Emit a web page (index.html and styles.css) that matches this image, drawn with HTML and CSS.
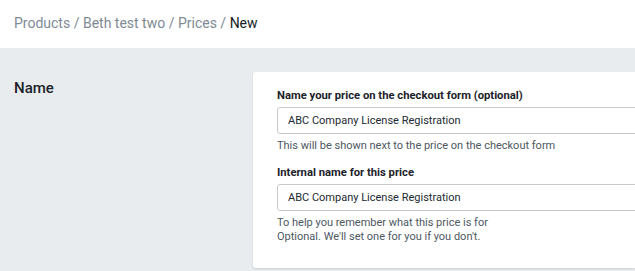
FILE: index.html
```html
<!DOCTYPE html>
<html>
<head>
<meta charset="utf-8">
<link rel="stylesheet" href="styles.css">
</head>
<body>
<header class="topbar">
  <nav class="crumbs">
    <span class="crumb">Products</span><span class="sep"> / </span><span class="crumb">Beth test two</span><span class="sep"> / </span><span class="crumb">Prices</span><span class="sep"> / </span><span class="current">New</span>
  </nav>
</header>
<main class="content">
  <section class="row">
    <h2 class="section-title">Name</h2>
    <div class="card">
      <div class="field">
        <label class="label">Name your price on the checkout form (optional)</label>
        <input class="input" type="text" value="ABC Company License Registration">
        <p class="help">This will be shown next to the price on the checkout form</p>
      </div>
      <div class="field">
        <label class="label">Internal name for this price</label>
        <input class="input" type="text" value="ABC Company License Registration">
        <p class="help">To help you remember what this price is for<br>Optional. We'll set one for you if you don't.</p>
      </div>
    </div>
  </section>
</main>
</body>
</html>
```
FILE: styles.css
```css
* { box-sizing: border-box; }
html, body { margin: 0; padding: 0; }
body {
  font-family: Roboto, "Liberation Sans", sans-serif;
  background: #e9ecef;
  width: 635px;
  height: 271px;
  overflow: hidden;
}
.topbar {
  background: #ffffff;
  height: 48px;
  padding: 13px 14px 0;
}
.crumbs {
  font-size: 14px;
  line-height: 20px;
  color: #7e8a95;
  white-space: nowrap;
}
.current { color: #151b21; }
.content {
  padding: 24px 0 0 14px;
}
.row {
  display: flex;
  align-items: flex-start;
}
.section-title {
  margin: 6px 0 0;
  width: 239px;
  flex: none;
  font-size: 15px;
  font-weight: 500;
  color: #1b2229;
  line-height: 20px;
}
.card {
  flex: 1;
  min-width: 0;
  height: 196px;
  overflow: hidden;
  background: #ffffff;
  border-radius: 3px 0 0 3px;
  box-shadow: 0 1px 2px rgba(0,0,0,0.12);
  padding: 16px 0 0 24px;
}
.field { margin-bottom: 12px; }
.label {
  display: block;
  font-size: 11.25px;
  font-weight: 700;
  color: #1b2229;
  line-height: 15px;
  margin-bottom: 4px;
}
.input {
  display: block;
  width: 400px;
  height: 27px;
  border: 1px solid #c5cacd;
  border-radius: 3px;
  padding: 0 10px;
  font-family: inherit;
  font-size: 11px;
  color: #222a31;
  background: #fff;
  outline: none;
}
.help {
  margin: 5px 0 0;
  font-size: 11px;
  line-height: 14px;
  color: #4d5861;
}
```
